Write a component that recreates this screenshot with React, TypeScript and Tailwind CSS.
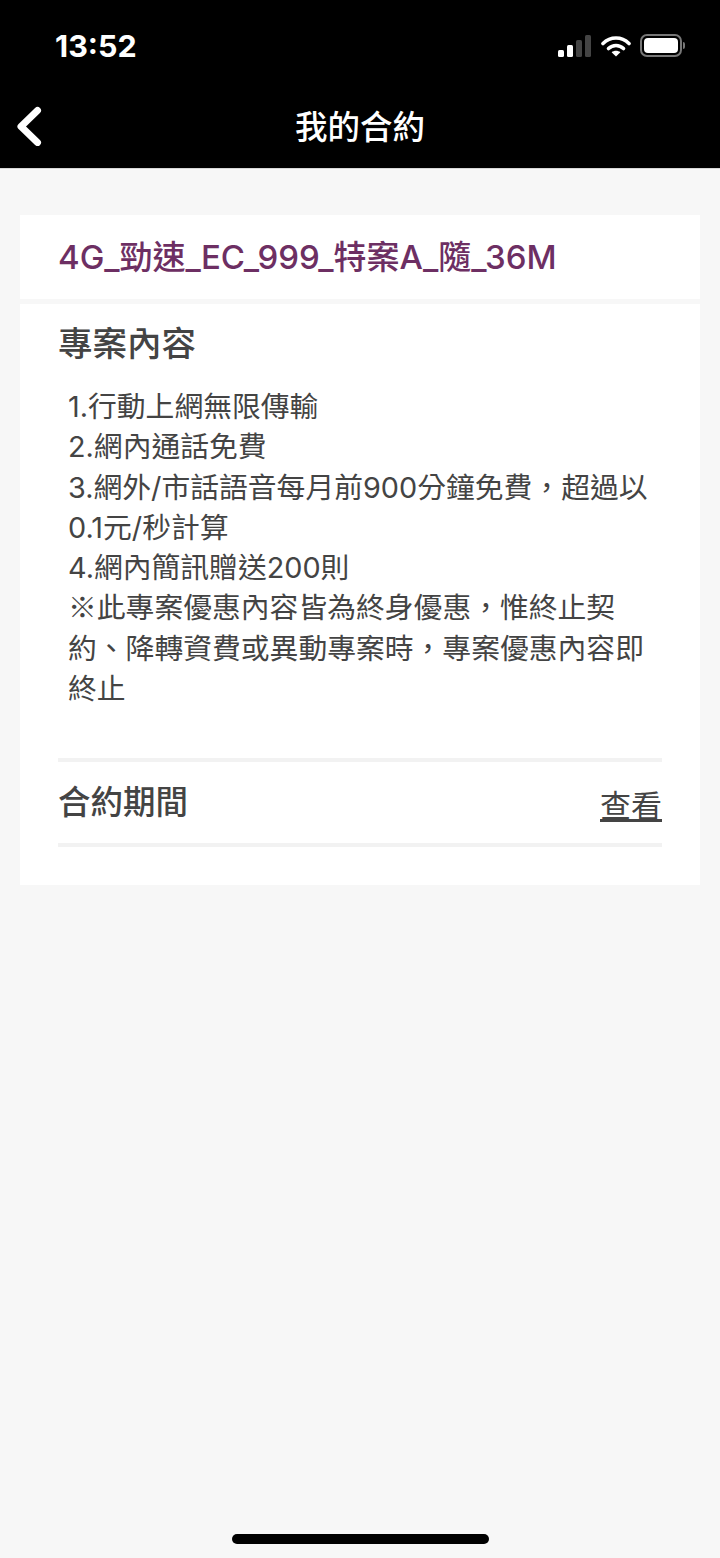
export default function App() {
  const font = { fontFamily: 'Inter,"Noto Sans CJK TC",sans-serif' };
  const cjk = { fontFamily: '"Noto Sans CJK TC",sans-serif' };
  return (
    <div style={font} className="flex h-[1558px] w-[720px] flex-col overflow-hidden bg-[#f7f7f7]">
      <header className="h-[169px] shrink-0 border-b border-[#d8d8d8] bg-black text-white">
        <div className="flex h-[90px] items-start justify-between pl-[55px] pr-[35px] pt-[28px]">
          <span className="text-[30.5px] font-bold leading-[36px]">13:52</span>
          <div className="mt-[6px] flex items-center gap-[9px]">
            <svg width="34" height="22" viewBox="0 0 34 22">
              <rect x="0" y="15" width="6" height="7" rx="1.5" fill="#fff" />
              <rect x="9" y="10" width="6" height="12" rx="1.5" fill="#fff" />
              <rect x="18" y="5" width="6" height="17" rx="1.5" fill="#444" />
              <rect x="27" y="0" width="6" height="22" rx="1.5" fill="#444" />
            </svg>
            <svg width="30" height="22" viewBox="0 0 30 22" fill="none">
              <path d="M2 8.5C9.5 1.2 20.5 1.2 28 8.5" stroke="#fff" strokeWidth="3.6" strokeLinecap="round" />
              <path d="M7.5 13.5C11.8 9.4 18.2 9.4 22.5 13.5" stroke="#fff" strokeWidth="3.6" strokeLinecap="round" />
              <path d="M15 21.5L10.6 17.2C13 15.2 17 15.2 19.4 17.2Z" fill="#fff" />
            </svg>
            <div className="flex items-center gap-[1px]">
              <div className="h-[23px] w-[42px] rounded-[7px] border-2 border-[#777] p-[2px]">
                <div className="h-full w-full rounded-[4px] bg-white" />
              </div>
              <div className="h-[7px] w-[2px] rounded-r-[2px] bg-[#777]" />
            </div>
          </div>
        </div>
        <div className="relative flex h-[78px] items-center justify-center pb-[2px]">
          <svg className="absolute left-[16px] top-[16px]" width="26" height="40" viewBox="0 0 26 40" fill="none">
            <path d="M21.5 4.5L5 20.5L21.5 36.5" stroke="#fff" strokeWidth="7" strokeLinecap="round" strokeLinejoin="round" />
          </svg>
          <h1 className="text-[32.5px] font-medium leading-[40px]">我的合約</h1>
        </div>
      </header>
      <main className="mx-[20px] mt-[46px] flex flex-col gap-[5px]">
        <section className="flex h-[84px] items-center bg-white pl-[38px]">
          <h2 className="text-[33px] font-medium leading-[40px] text-[#6d2f63]">4G_勁速_EC_999_特案A_隨_36M</h2>
        </section>
        <section className="h-[581px] bg-white px-[38px] pt-[18px]">
          <h3 className="text-[34.5px] font-medium leading-[44px] text-[#444444]">專案內容</h3>
          <p className="mt-[21px] pl-[10px] text-[28.8px] leading-[40.3px] text-[#444444]">
            1.行動上網無限傳輸<br />
            2.網內通話免費<br />
            3.網外/市話語音每月前900分鐘免費，超過以<br />
            0.1元/秒計算<br />
            4.網內簡訊贈送200則<br />
            <span style={cjk} className="leading-none">※</span>此專案優惠內容皆為終身優惠，惟終止契<br />
            約、降轉資費或異動專案時，專案優惠內容即<br />
            終止
          </p>
          <div className="mt-[49px] flex h-[89px] items-center justify-between border-y-4 border-[#f2f2f2]">
            <span className="text-[32.5px] font-medium leading-[40px] text-[#444444]">合約期間</span>
            <a className="mt-[6px] text-[31px] leading-[40px] text-[#444444] underline">查看</a>
          </div>
        </section>
      </main>
      <div className="mx-auto mt-auto mb-[14px] h-[10px] w-[257px] rounded-full bg-black" />
    </div>
  );
}
